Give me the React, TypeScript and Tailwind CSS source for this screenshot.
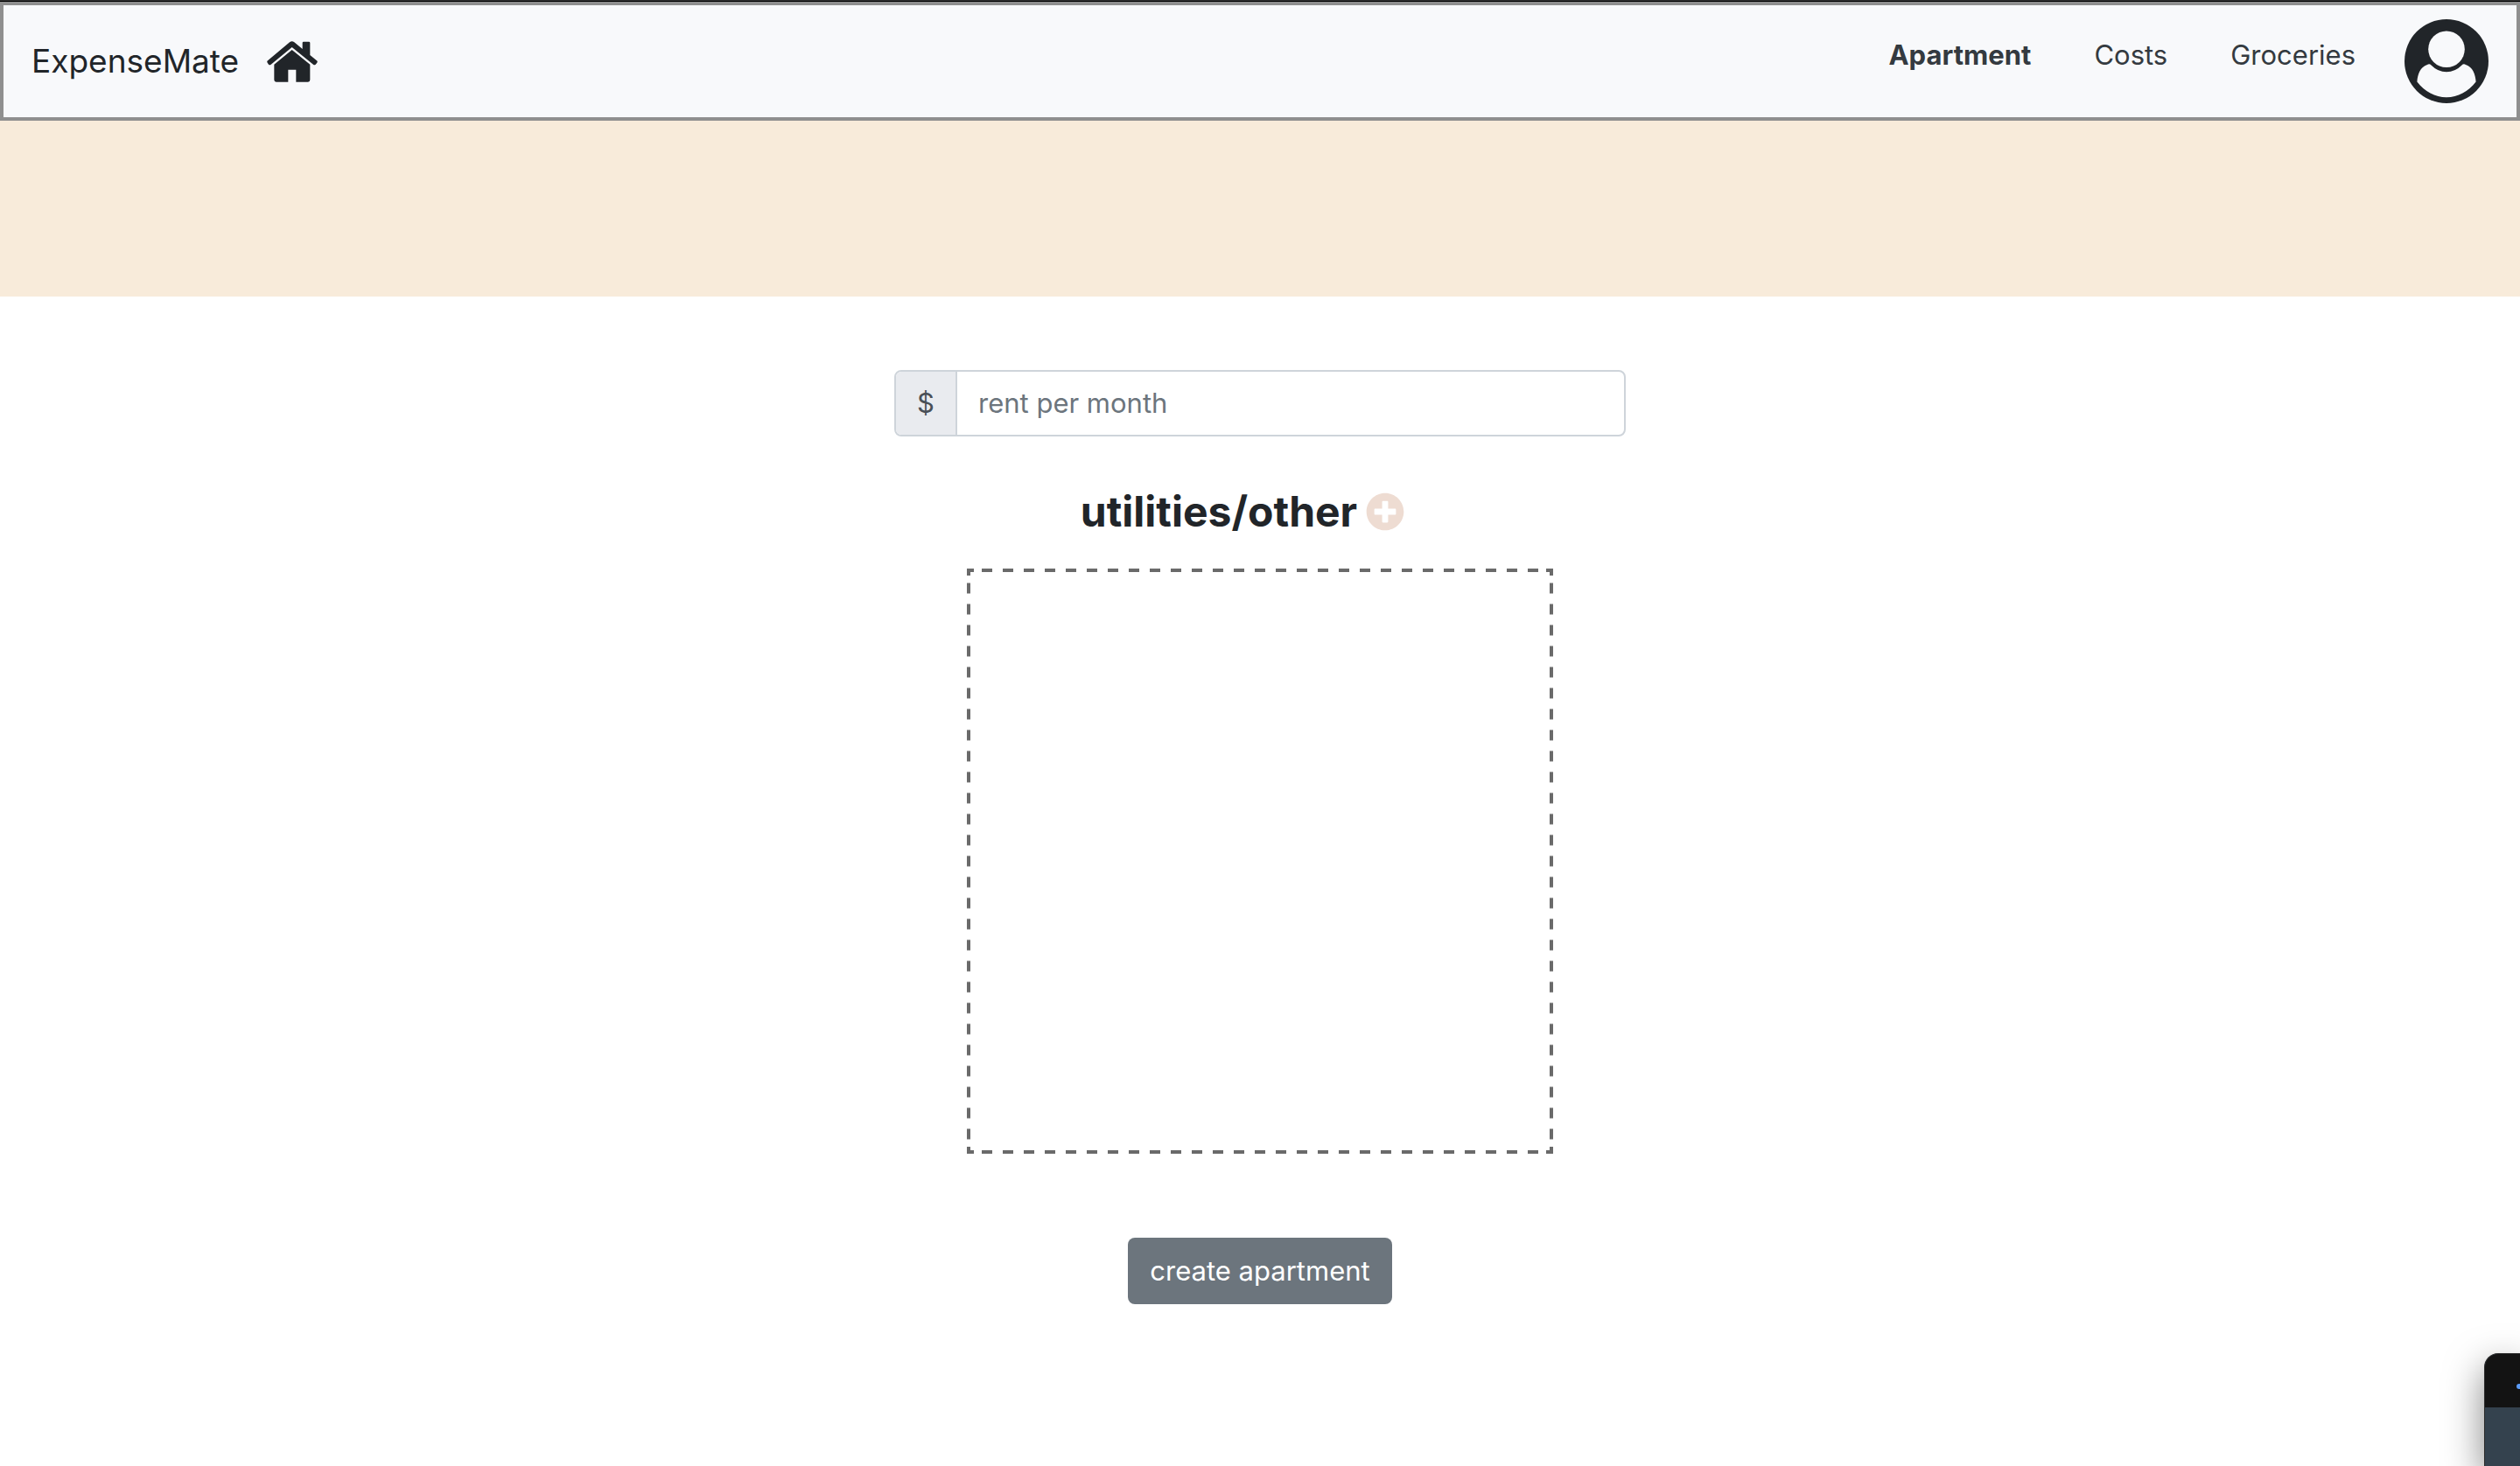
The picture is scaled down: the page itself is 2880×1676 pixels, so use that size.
import { FaPlusCircle } from "react-icons/fa";

function HomeIcon() {
  return (
    <svg viewBox="27 28 174 141" className="h-[47px] w-[58px]" fill="currentColor" aria-hidden="true">
      <path d="M105 32 Q113 26 121 32 L149 55 V34 Q149 30 153 30 H171 Q175 30 175 34 V76 L198 95 Q202 98 199 102 L194 108 Q190 112 186 108 L113 49 L41 108 Q37 112 33 108 L29 102 Q26 98 30 95 Z" />
      <path d="M113 58 L175 108 V161 Q175 168 168 168 H127 V126 H100 V168 H59 Q52 168 52 161 V108 Z" />
    </svg>
  );
}

function UserIcon() {
  return (
    <svg viewBox="0 0 96 96" className="size-24 text-[#212529]" aria-hidden="true">
      <circle cx="48" cy="48" r="48" fill="currentColor" />
      <circle cx="48" cy="34.3" r="20.8" fill="#f8f9fb" />
      <path d="M26 52 Q28.5 50.5 30.500 52.500 Q38 60.200 48 60.200 Q58 60.200 65.500 52.500 Q67.500 50.500 70 52 C78 54.500 81 63 81.600 71.500 C73 82.500 61 89.300 48 89.300 C35 89.300 23 82.500 14.400 71.500 C15 63 18 54.500 26 52Z" fill="#f8f9fb" />
    </svg>
  );
}

function UtilitiesBox() {
  return (
    <div className="relative mt-[35px] h-[669px] w-[670px] max-w-full">
      <div className="absolute inset-x-0 top-0 h-1 bg-[linear-gradient(90deg,transparent_25%,#6a6a6a_25%,#6a6a6a_75%,transparent_75%)] bg-[length:24px_4px] bg-[position:center] bg-repeat-x" />
      <div className="absolute inset-x-0 bottom-0 h-1 bg-[linear-gradient(90deg,transparent_25%,#6a6a6a_25%,#6a6a6a_75%,transparent_75%)] bg-[length:24px_4px] bg-[position:center] bg-repeat-x" />
      <div className="absolute inset-y-0 left-0 w-1 bg-[linear-gradient(180deg,transparent_25%,#6a6a6a_25%,#6a6a6a_75%,transparent_75%)] bg-[length:4px_24px] bg-[position:center] bg-repeat-y" />
      <div className="absolute inset-y-0 right-0 w-1 bg-[linear-gradient(180deg,transparent_25%,#6a6a6a_25%,#6a6a6a_75%,transparent_75%)] bg-[length:4px_24px] bg-[position:center] bg-repeat-y" />
      <div className="absolute top-0 left-0 size-2 border-t-4 border-l-4 border-[#6a6a6a]" />
      <div className="absolute top-0 right-0 size-2 border-t-4 border-r-4 border-[#6a6a6a]" />
      <div className="absolute bottom-0 left-0 size-2 border-b-4 border-l-4 border-[#6a6a6a]" />
      <div className="absolute right-0 bottom-0 size-2 border-r-4 border-b-4 border-[#6a6a6a]" />
    </div>
  );
}

function FloatingWindow() {
  return (
    <div className="absolute right-0 bottom-0 w-[41px] overflow-hidden rounded-tl-2xl border-t border-l border-[#2a2a2a] bg-[#34424e] shadow-[0_16px_44px_rgba(0,0,0,0.5)]">
      <div className="flex h-[61px] items-center justify-end bg-[#131313] pt-3">
        <div className="h-1.5 w-1 rounded-l-sm bg-[#5b9bf8]" />
      </div>
      <div className="h-[67px]" />
    </div>
  );
}

export default function App() {
  return (
    <div className="relative min-h-screen overflow-hidden bg-white font-[Inter,sans-serif] text-[#212529]">
      <div className="h-0.5 border-t border-[#333333] bg-black" />
      <header className="flex h-[136px] items-center justify-between border-4 border-[#8f8f8f] bg-[#f8f9fb] px-8">
        <div className="flex items-center gap-8">
          <a href="#" className="text-[37px]">ExpenseMate</a>
          <a href="#" aria-label="Home"><HomeIcon /></a>
        </div>
        <div className="flex items-center">
          <nav className="mr-14 mb-3.5 flex gap-[72px] text-[31px] text-[#343a40]">
            <a href="#" className="font-bold">Apartment</a>
            <a href="#">Costs</a>
            <a href="#">Groceries</a>
          </nav>
          <button type="button" aria-label="Account"><UserIcon /></button>
        </div>
      </header>
      <div className="h-[201px] bg-[#f8ebda]" />
      <form className="flex flex-col items-center pt-[84px]">
        <div className="flex h-[76px] w-[836px] max-w-full overflow-hidden rounded-lg border-2 border-[#ced4da] text-[31px]">
          <label htmlFor="rent" className="flex w-[70px] items-center justify-center border-r-2 border-[#ced4da] bg-[#e9ebef] text-[#495057]">$</label>
          <input id="rent" type="text" placeholder="rent per month" className="min-w-0 flex-1 px-6 outline-none placeholder:text-[#6c757d]" />
        </div>
        <div className="mt-14 mr-10 flex items-center gap-2.5">
          <h2 className="text-[48px] leading-[60px] font-bold">utilities/other</h2>
          <button type="button" aria-label="Add utility"><FaPlusCircle className="size-11 text-[#eedcd2]" /></button>
        </div>
        <UtilitiesBox />
        <button type="button" className="mt-24 h-[76px] rounded-lg bg-[#6c757d] px-[25px] text-[31px] text-white">create apartment</button>
      </form>
      <FloatingWindow />
    </div>
  );
}
